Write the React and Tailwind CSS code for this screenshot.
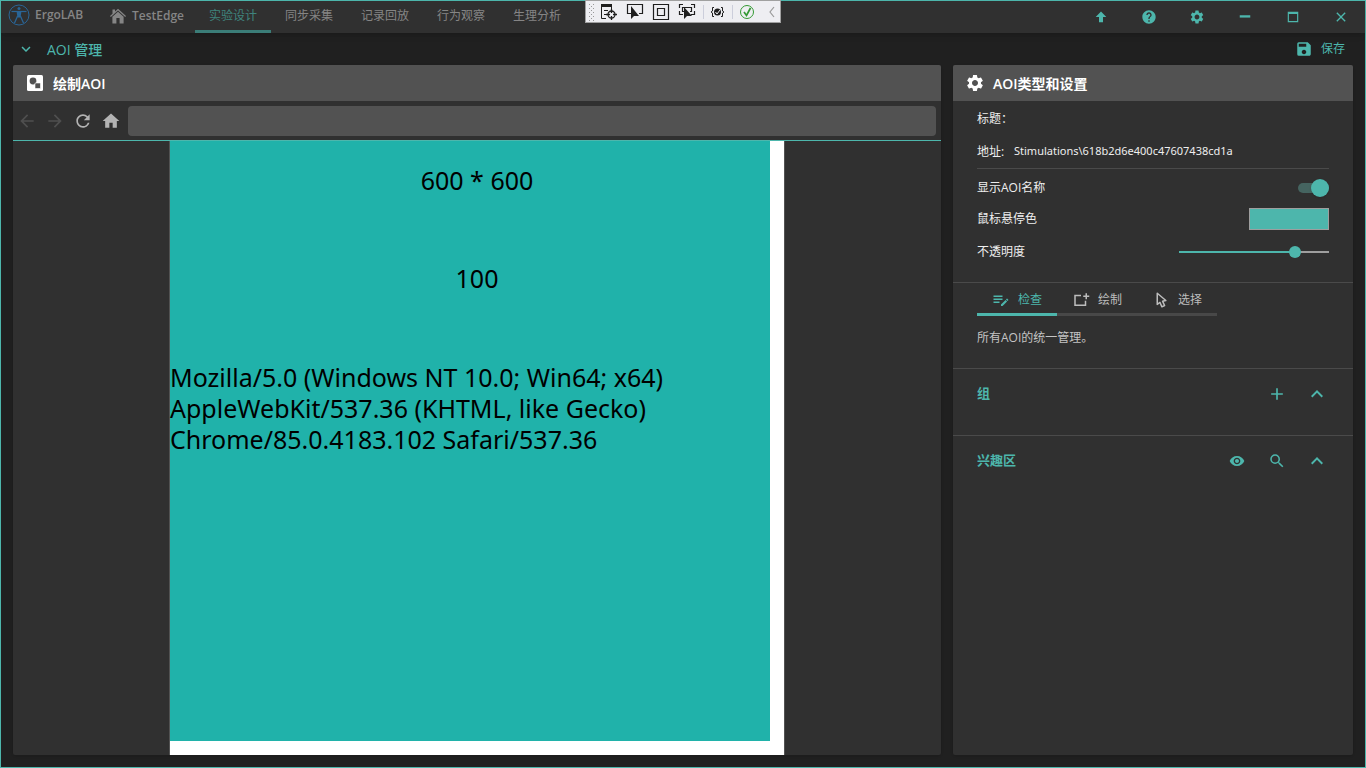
import React from "react";
import { MdHelp, MdSettings, MdSave, MdRefresh, MdHome, MdArrowBack, MdArrowForward, MdAdd, MdKeyboardArrowUp, MdKeyboardArrowDown, MdSearch, MdVisibility, MdClose } from "react-icons/md";

function Glyph({ d, className }) {
  return (
    <svg viewBox="0 0 24 24" fill="currentColor" className={className} aria-hidden="true">
      <path d={d} />
    </svg>
  );
}

const playlistEdit = "M2,6V8H14V6H2M2,10V12H14V10H2M20.04,10.13C19.9,10.13 19.76,10.19 19.65,10.3L18.65,11.3L20.7,13.35L21.7,12.35C21.92,12.14 21.92,11.79 21.7,11.58L20.42,10.3C20.31,10.19 20.18,10.13 20.04,10.13M18.07,11.88L12,17.94V20H14.06L20.12,13.93L18.07,11.88M2,14V16H10V14H2Z";
const cursorOutline = "M10.07,14.27C10.57,14.03 11.16,14.25 11.4,14.75L13.7,19.74L15.5,18.89L13.19,13.91C12.95,13.41 13.17,12.81 13.67,12.58L13.95,12.5L16.25,12.05L8,5.12V15.9L9.82,14.43L10.07,14.27M13.64,21.97C13.14,22.21 12.54,22 12.31,21.5L10.13,16.76L7.62,18.78C7.45,18.92 7.24,19 7,19A1,1 0 0,1 6,18V3A1,1 0 0,1 7,2C7.24,2 7.47,2.09 7.64,2.23L7.65,2.22L19.14,11.86C19.57,12.22 19.62,12.85 19.27,13.27C19.12,13.45 18.91,13.57 18.7,13.61L15.54,14.23L17.74,18.96C18,19.46 17.76,20.05 17.26,20.28L13.64,21.97Z";
const rectPlus = "M18,3H20V6H23V8H20V11H18V8H15V6H18V3M3,5H12V7H5V18H17V13H19V20H3V5Z";
const arrowUp = "M15,20H9V12H4L12,3.800L20,12H15V20Z";
const maximize = "M3,3H21V21H3V3M5,7V19H19V7H5Z";

function Logo() {
  return (
    <svg viewBox="0 0 22 22" className="size-[22px]" fill="none" stroke="#2a6596" aria-hidden="true">
      <circle cx="11" cy="11" r="10" strokeWidth="1" />
      <circle cx="11" cy="4.600" r="1.500" fill="#2a6596" stroke="none" />
      <path d="M3.500 7.500H18.500" strokeWidth="1.200" />
      <path d="M9.600 12 6.500 19M12.400 12l3.100 7" strokeWidth="1.300" />
      <path d="M8.600 7.400h4.800l-.8 6H9.400z" fill="#2a6596" stroke="none" />
    </svg>
  );
}

const mainTabs = ["实验设计", "同步采集", "记录回放", "行为观察", "生理分析"];

function DebugBar() {
  return (
    <div className="absolute -top-px left-[584px] flex h-[23px] w-[196px] items-center border border-[#a0a0a0] bg-[#eeeef2] text-[#1e1e1e]">
      <svg viewBox="0 0 194 20" className="h-5 w-[194px]" fill="none" stroke="currentColor" aria-hidden="true">
        <path d="M3.500 2v17M7.500 2v17" stroke="#999" strokeDasharray="1 3" />
        <path d="M5.500 4v14" stroke="#999" strokeDasharray="1 3" />
        <path d="M15 3.500h11" strokeWidth="3" />
        <path d="M15.500 3v13.500H20M25.500 4v3M18 8.500h4M18 12.500h2" />
        <circle cx="25.500" cy="12.500" r="3.500" strokeWidth="1.300" />
        <path d="M25.500 7v4M25.500 14v4M20 12.500h4M27 12.500h4" strokeWidth="1.300" />
        <path d="M45 11.500h-3.500v-9h15v9H53" strokeWidth="1.200" />
        <path d="M45 4v13l3-3h5z" fill="currentColor" stroke="none" />
        <path d="M67.500 2.500h15v15h-15zM71.500 6.500h7v7h-7z" strokeWidth="1.200" />
        <path d="M93.500 6V2.500H97M105 2.500h3.500V6M108.500 9v3.500H105M97 12.500h-3.500V9M98 9.500h-1.500v-4h9v4H104" strokeWidth="1.200" />
        <path d="M98 5v12l3-3h5z" fill="currentColor" stroke="none" />
        <path d="M117.500 3v14M146.500 3v14" stroke="#cccedb" />
        <path d="M128 5.500h-1.500V9L125 10l1.500 1v3.500h1.500M135 5.500h1.500V9l1.500 1-1.500 1v3.500H135" />
        <circle cx="131.500" cy="10" r="3.500" fill="currentColor" stroke="none" />
        <path d="m129.500 10 1.500 2 3-4" stroke="#eeeef2" />
        <circle cx="161" cy="10" r="6.500" stroke="#339933" />
        <path d="m158 10 2.500 3.500 4-7.500" stroke="#339933" strokeWidth="1.700" />
        <path d="m188 5-4 5 4 5" stroke="#999" strokeWidth="1.200" />
      </svg>
    </div>
  );
}

function TitleBar() {
  return (
    <header className="flex h-8 shrink-0 items-stretch bg-[#303030] text-[#858585] shadow-md">
      <div className="flex w-[109px] items-center gap-[5px] pb-1 pl-[7px]">
        <Logo />
        <span className="text-[12px] font-semibold">ErgoLAB</span>
      </div>
      <a href="#home" className="flex w-[85px] items-center gap-[6px] pb-0.5">
        <svg viewBox="0 0 16 16" className="size-4" fill="currentColor" aria-hidden="true">
          <path d="M8 .8 16 8l-.8.9L8 2.600.8 8.900 0 8l2.500-2.300V1.500h2.500v2zM8 3.800l5.600 5V15.500h-4V10H6.400v5.500h-4V8.800z" />
        </svg>
        <span className="text-[12px] font-semibold">TestEdge</span>
      </a>
      <nav className="flex">
        {mainTabs.map((t, i) => (
          <button key={t} className={i === 0 ? "w-[76px] border-b-3 border-[#3b7d78] text-[12px] text-[#3f837d]" : "w-[76px] border-b-3 border-transparent text-[12px]"}>{t}</button>
        ))}
      </nav>
      <div className="ml-auto flex items-center text-[#4db6ac]">
        <button aria-label="上传" className="grid w-12 place-items-center"><Glyph d={arrowUp} className="size-4" /></button>
        <button aria-label="帮助" className="grid w-12 place-items-center"><MdHelp className="size-4" /></button>
        <button aria-label="设置" className="grid w-12 place-items-center"><MdSettings className="size-4" /></button>
        <button aria-label="最小化" className="grid w-12 place-items-center"><Glyph d="M3,9H21V13H3Z" className="size-3.5" /></button>
        <button aria-label="最大化" className="grid w-12 place-items-center"><Glyph d={maximize} className="size-3.5" /></button>
        <button aria-label="关闭" className="grid w-12 place-items-center"><MdClose className="size-4" /></button>
      </div>
    </header>
  );
}

function PanelHeader({ icon, children }) {
  return (
    <div className="flex h-9 shrink-0 items-center gap-2 rounded-t-xs bg-[#525252] pl-3 text-white">
      {icon}
      <h2 className="text-[14px] font-semibold">{children}</h2>
    </div>
  );
}

function CanvasPanel() {
  return (
    <section className="flex min-w-0 flex-1 flex-col rounded-xs bg-[#303030] shadow">
      <PanelHeader
        icon={
          <svg viewBox="0 0 20 20" className="size-5" aria-hidden="true">
            <rect x="2" y="2" width="16" height="16" rx="1.500" fill="#fff" />
            <circle cx="8" cy="8" r="3.400" fill="#525252" />
            <path d="M10 10h5.500v5.500H10z" fill="#525252" stroke="#fff" strokeWidth=".6" />
          </svg>
        }
      >
        绘制AOI
      </PanelHeader>
      <div className="flex h-10 shrink-0 items-center border-b border-[#4db6ac] pr-[5px] text-[#b3b3b3]">
        <button aria-label="后退" className="grid w-7 place-items-center text-[#4f4f4f]"><MdArrowBack className="size-5" /></button>
        <button aria-label="前进" className="grid w-7 place-items-center text-[#4f4f4f]"><MdArrowForward className="size-5" /></button>
        <button aria-label="刷新" className="grid w-7 place-items-center"><MdRefresh className="size-5" /></button>
        <button aria-label="主页" className="grid w-7 place-items-center"><MdHome className="size-5" /></button>
        <input aria-label="网址" className="ml-[3px] h-[30px] min-w-0 flex-1 rounded bg-[#525252] px-2 text-[12px] text-white outline-none" />
      </div>
      <div className="flex min-h-0 flex-1 justify-center overflow-hidden">
        <div className="w-[616px] border-x border-[#525252] bg-white">
          <div className="h-[600px] w-[600px] bg-[#20b2aa] pt-6 font-['Noto_Sans','Open_Sans',sans-serif] text-[25px] leading-[31px] text-black">
            <p className="pl-[14px] text-center">600 * 600</p>
            <p className="pt-[67px] pl-[14px] text-center">100</p>
            <p className="pt-[68px]">Mozilla/5.0 (Windows NT 10.0; Win64; x64)<br />AppleWebKit/537.36 (KHTML, like Gecko)<br />Chrome/85.0.4183.102 Safari/537.36</p>
          </div>
        </div>
      </div>
    </section>
  );
}

const tools = [
  { label: "检查", d: playlistEdit },
  { label: "绘制", d: rectPlus },
  { label: "选择", d: cursorOutline },
];

function SettingsPanel() {
  return (
    <section className="flex w-[400px] shrink-0 flex-col rounded-xs bg-[#303030] text-[12px] text-[#eee] shadow">
      <PanelHeader icon={<MdSettings className="size-5" />}>AOI类型和设置</PanelHeader>
      <div className="border-b border-[#4a4a4a] px-6 pb-3">
        <dl className="border-b border-[#4a4a4a] pt-0.5">
          <div className="flex h-8 items-center"><dt>标题：</dt><dd /></div>
          <div className="flex h-[33px] items-center"><dt className="w-[37px]">地址:</dt><dd className="font-['Noto_Sans',sans-serif] text-[11px]">Stimulations\618b2d6e400c47607438cd1a</dd></div>
        </dl>
        <div className="flex h-9 items-center justify-between pt-px">
          <label htmlFor="show-names">显示AOI名称</label>
          <input id="show-names" type="checkbox" role="switch" defaultChecked className="relative h-2.5 w-[31px] appearance-none rounded-full bg-[#456460] after:absolute after:-top-1 after:right-0 after:size-[18px] after:rounded-full after:bg-[#4db6ac] after:shadow after:content-['']" />
        </div>
        <div className="flex h-7 items-center justify-between">
          <span id="hover-label">鼠标悬停色</span>
          <button aria-labelledby="hover-label" className="h-[22px] w-20 border border-[#9e9e9e] bg-[#4db6ac]" />
        </div>
        <div className="flex h-[37px] items-center justify-between">
          <label htmlFor="opacity">不透明度</label>
          <input id="opacity" type="range" min="0" max="100" defaultValue="80" className="h-3 w-[150px] appearance-none bg-transparent [&::-webkit-slider-runnable-track]:h-0.5 [&::-webkit-slider-runnable-track]:bg-linear-to-r [&::-webkit-slider-runnable-track]:from-[#4db6ac] [&::-webkit-slider-runnable-track]:from-77% [&::-webkit-slider-runnable-track]:to-[#9e9e9e] [&::-webkit-slider-runnable-track]:to-77% [&::-webkit-slider-thumb]:-mt-[5px] [&::-webkit-slider-thumb]:size-3 [&::-webkit-slider-thumb]:appearance-none [&::-webkit-slider-thumb]:rounded-full [&::-webkit-slider-thumb]:bg-[#4db6ac]" />
        </div>
      </div>
      <div className="border-b border-[#4a4a4a] px-6 pb-5">
        <div className="flex">
          {tools.map((t, i) => (
            <button key={t.label} className={i === 0 ? "flex h-[33px] w-20 items-center justify-center gap-2 border-b-3 border-[#4db6ac] pt-1 text-[#4db6ac]" : "flex h-[33px] w-20 items-center justify-center gap-2 border-b-3 border-[#484848] pt-1 text-[#bdbdbd]"}>
              <Glyph d={t.d} className="size-[18px]" />
              {t.label}
            </button>
          ))}
        </div>
        <p className="pt-3 leading-5 text-[#c4c4c4]">所有AOI的统一管理。</p>
      </div>
      <div className="flex h-[67px] items-center border-b border-[#4a4a4a] px-6 pb-4 text-[#4db6ac]">
        <h3 className="flex-1 text-[13px] font-bold">组</h3>
        <button aria-label="添加组" className="grid w-6 place-items-center"><MdAdd className="size-5" /></button>
        <button aria-label="收起组" className="ml-4 grid w-6 place-items-center"><MdKeyboardArrowUp className="size-6" /></button>
      </div>
      <div className="flex h-[66px] items-center px-6 pb-4 text-[#4db6ac]">
        <h3 className="flex-1 text-[13px] font-bold">兴趣区</h3>
        <button aria-label="显示" className="grid w-6 place-items-center"><MdVisibility className="size-4" /></button>
        <button aria-label="搜索" className="ml-4 grid w-6 place-items-center"><MdSearch className="size-[18px]" /></button>
        <button aria-label="收起兴趣区" className="ml-4 grid w-6 place-items-center"><MdKeyboardArrowUp className="size-6" /></button>
      </div>
    </section>
  );
}

export default function App() {
  return (
    <div className="relative flex h-screen flex-col border border-[#4db6ac] bg-[#202020] font-['Open_Sans','Noto_Sans_CJK_SC',sans-serif]">
      <TitleBar />
      <div className="flex h-8 shrink-0 items-center pl-[15px] pr-5 text-[#4db6ac]">
        <button aria-label="展开" className="grid w-5 place-items-center"><MdKeyboardArrowDown className="size-[18px]" /></button>
        <h1 className="pl-[11px] text-[14px] font-medium">AOI 管理</h1>
        <button className="ml-auto flex items-center gap-2 text-[12px]"><MdSave className="size-[18px]" />保存</button>
      </div>
      <main className="flex min-h-0 flex-1 gap-3 px-3 pb-3">
        <CanvasPanel />
        <SettingsPanel />
      </main>
      <DebugBar />
    </div>
  );
}
